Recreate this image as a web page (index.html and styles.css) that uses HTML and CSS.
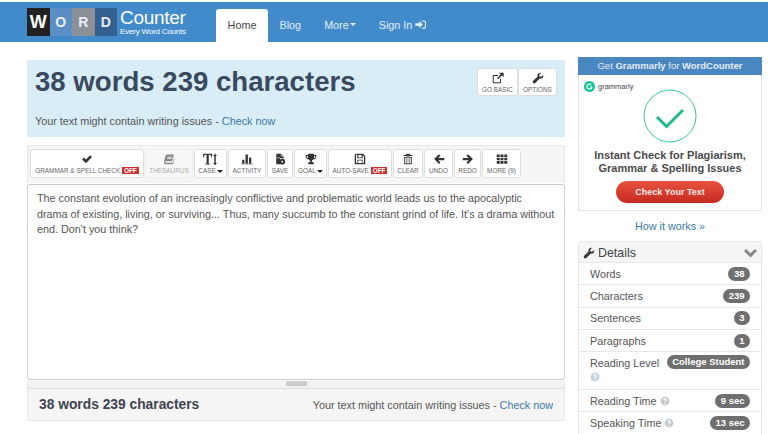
FILE: index.html
```html
<!DOCTYPE html>
<html lang="en">
<head>
<meta charset="utf-8">
<title>WordCounter</title>
<link rel="stylesheet" href="styles.css">
</head>
<body>
<svg class="defs" width="0" height="0" aria-hidden="true">
  <symbol id="i-check" viewBox="0 0 16 16"><path d="M1.500 8.500l2.400-2.400L6.600 8.700 12.300 3l2.400 2.400L6.600 13.500z"/></symbol>
  <symbol id="i-book" viewBox="0 0 16 16"><path d="M5 2h9.500l-2.400 9H3.400c-.6 0-.9.500-.8 1s.500 1 1 1h9.600l1.600-6 .6.500L13.500 15H3.200C2 15 1 13.600 1.300 12L3.400 3.500C3.600 2.600 4.200 2 5 2z"/><path d="M6 5h6v1H6zM5.500 7h6v1h-6z" fill="#fff"/></symbol>
  <symbol id="i-text" viewBox="0 0 18 16"><path d="M0 1h11v4.500h-.8C10 3.500 9.400 2 8 2H6.800v11l1.700.5v.8H2.500v-.8L4.200 13V2H3C1.600 2 1 3.500.8 5.500H0z"/><path d="M14.600 1l2.400 2.800h-1.500v8.400H17l-2.400 2.800-2.400-2.800h1.500V3.800h-1.500z"/></symbol>
  <symbol id="i-bars" viewBox="0 0 16 16"><path d="M1.500 9h3v5h-3zM6 2h3.200v12H6zM10.700 6h3v8h-3zM0 14.200h16V15H0z"/></symbol>
  <symbol id="i-file" viewBox="0 0 16 16"><path d="M3 1h6l4 4v2H8v8H3z"/><path d="M9 1v4h4z" fill="#999"/><circle cx="11" cy="11.500" r="3.800"/><circle cx="11" cy="11.500" r="1.200" fill="#fff"/><path d="M4.500 6h3v1h-3z" fill="#fff"/></symbol>
  <symbol id="i-trophy" viewBox="0 0 16 16"><path d="M4 1h8v1.500h3v2c0 2-1.500 3.500-3.500 3.700-.5.900-1.300 1.500-2.300 1.800v2h2v1.500h.8V15H4v-1.500h.8V12h2v-2c-1-.3-1.800-.9-2.300-1.800C2.500 8 1 6.500 1 4.500v-2h3zm0 3H2.500v.5c0 1 .7 1.900 1.700 2.200zm8 0v2.700c1-.3 1.700-1.200 1.700-2.200V4z"/></symbol>
  <symbol id="i-floppy" viewBox="0 0 16 16"><path fill-rule="evenodd" d="M2 1h10l3 3v11H1V2zm.8.800v11.400h10.400V4.500L11.500 2.800V7h-7V2.800zM6 2.800V6h4V2.800zM4.500 9h7v4.500h-1V10h-5v3.500h-1z"/></symbol>
  <symbol id="i-trash" viewBox="0 0 16 16"><path fill-rule="evenodd" d="M6 1h4l1 1.500h3V4H2V2.500h3zM3 5h10v10H3zm1.200 1.200v7.600h7.600V6.200zM6 7h1v6H6zm3 0h1v6H9z"/></symbol>
  <symbol id="i-left" viewBox="0 0 16 16"><path d="M8 1.500l2 2L7 6.500h8v3H7l3 3-2 2L1.500 8z"/></symbol>
  <symbol id="i-right" viewBox="0 0 16 16"><path d="M8 1.500l-2 2 3 3H1v3h8l-3 3 2 2L14.500 8z"/></symbol>
  <symbol id="i-grid" viewBox="0 0 16 16"><path d="M1 2h4v3.400H1zm5 0h4v3.400H6zm5 0h4v3.400h-4zM1 6.400h4v3.400H1zm5 0h4v3.400H6zm5 0h4v3.400h-4zM1 10.800h4v3.400H1zm5 0h4v3.400H6zm5 0h4v3.400h-4z"/></symbol>
  <symbol id="i-ext" viewBox="0 0 16 16"><path d="M12 9v4.500c0 .8-.7 1.500-1.500 1.500h-8C1.700 15 1 14.300 1 13.500v-8C1 4.700 1.700 4 2.500 4H8v1.300H3c-.3 0-.7.300-.7.700v7c0 .4.400.7.700.7h7c.4 0 .7-.3.700-.7V9z"/><path d="M9.500 1H15.500v6l-2.200-2.200-5 5-1.600-1.600 5-5z"/></symbol>
  <symbol id="i-wrench" viewBox="0 0 16 16"><path d="M15 4.200c.4 1.400 0 2.800-1 3.700-1 1-2.400 1.200-3.700.8L4.400 14.600c-.8.800-2 .8-2.800 0-.8-.8-.8-2 0-2.800L7.500 5.900c-.5-1.300-.2-2.800.8-3.800 1-1 2.400-1.300 3.700-.9L9.500 3.700l.4 2.200 2.200.5z"/></symbol>
  <symbol id="i-signin" viewBox="0 0 16 16"><path d="M6 3l5.500 5L6 13v-3H0.500V6H6z"/><path d="M10 2h3.500C14.900 2 16 3.100 16 4.500v7c0 1.400-1.100 2.500-2.500 2.500H10v-1.800h3.200c.7 0 1.200-.5 1.200-1.200V5c0-.7-.5-1.200-1.200-1.200H10z"/></symbol>
  <symbol id="i-help" viewBox="0 0 16 16"><path fill-rule="evenodd" d="M8 1a7 7 0 110 14A7 7 0 018 1zM7 11v2h2v-2zM8 3.500c-1.800 0-3 1-3.200 2.500l1.800.4C6.800 5.600 7.200 5.200 8 5.200s1.200.4 1.200.9c0 .5-.4.800-1 1.200C7.400 7.800 7 8.400 7 9.200v.8h2v-.5c0-.4.200-.6.800-1 .8-.5 1.300-1.200 1.300-2.300 0-1.600-1.300-2.700-3.100-2.700z"/></symbol>
  <symbol id="i-chevron" viewBox="0 0 16 12"><path d="M2.500 1L8 6.300 13.500 1 16 3.600 8 11.500 0 3.600z"/></symbol>
</svg>

<header class="navbar">
  <a class="logo" href="#">
    <span class="tile tile-w">W</span><span class="tile tile-o">O</span><span class="tile tile-r">R</span><span class="tile tile-d">D</span>
    <span class="logo-text"><span class="logo-main">Counter</span><span class="logo-sub">Every Word Counts</span></span>
  </a>
  <nav class="nav">
    <a class="nav-item active" href="#">Home</a>
    <a class="nav-item" href="#">Blog</a>
    <a class="nav-item" href="#">More<span class="caret"></span></a>
    <a class="nav-item" href="#">Sign In <svg class="nav-icon"><use href="#i-signin"/></svg></a>
  </nav>
</header>

<main class="page">
  <section class="left">
    <div class="hero">
      <div class="hero-top">
        <h1>38 words 239 characters</h1>
        <div class="hero-btns">
          <button class="tool tool-basic"><svg class="ic"><use href="#i-ext"/></svg><span>GO BASIC</span></button>
          <button class="tool tool-options"><svg class="ic"><use href="#i-wrench"/></svg><span>OPTIONS</span></button>
        </div>
      </div>
      <p class="hero-note">Your text might contain writing issues - <a href="#">Check now</a></p>
    </div>

    <div class="toolbar">
      <button class="tool w-grammar"><svg class="ic"><use href="#i-check"/></svg><span>GRAMMAR &amp; SPELL CHECK <b class="off">OFF</b></span></button>
      <button class="tool w-thes disabled"><svg class="ic"><use href="#i-book"/></svg><span>THESAURUS</span></button>
      <button class="tool w-case"><svg class="ic ic-text"><use href="#i-text"/></svg><span>CASE<i class="caret"></i></span></button>
      <button class="tool w-act"><svg class="ic"><use href="#i-bars"/></svg><span>ACTIVITY</span></button>
      <button class="tool w-save"><svg class="ic"><use href="#i-file"/></svg><span>SAVE</span></button>
      <button class="tool w-goal"><svg class="ic"><use href="#i-trophy"/></svg><span>GOAL<i class="caret"></i></span></button>
      <button class="tool w-auto"><svg class="ic"><use href="#i-floppy"/></svg><span>AUTO-SAVE <b class="off">OFF</b></span></button>
      <button class="tool w-clear"><svg class="ic"><use href="#i-trash"/></svg><span>CLEAR</span></button>
      <button class="tool w-undo"><svg class="ic"><use href="#i-left"/></svg><span>UNDO</span></button>
      <button class="tool w-redo"><svg class="ic"><use href="#i-right"/></svg><span>REDO</span></button>
      <button class="tool w-more"><svg class="ic"><use href="#i-grid"/></svg><span>MORE (9)</span></button>
    </div>

    <div class="editor">The constant evolution of an increasingly conflictive and problematic world leads us to the apocalyptic drama of existing, living, or surviving... Thus, many succumb to the constant grind of life. It's a drama without end. Don't you think?</div>
    <div class="grip"><span class="grip-handle"></span></div>

    <div class="summary">
      <strong>38 words 239 characters</strong>
      <span class="summary-note">Your text might contain writing issues - <a href="#">Check now</a></span>
    </div>
  </section>

  <aside class="right">
    <div class="ad">
      <div class="ad-head">Get <b>Grammarly</b> for <b>WordCounter</b></div>
      <div class="ad-body">
        <div class="ad-brand"><svg class="ad-g" viewBox="0 0 16 16"><circle cx="8" cy="8" r="8" fill="#15c39a"/><path d="M11.500 8.500A3.600 3.600 0 118 4.500c1 0 1.800.3 2.500 1" fill="none" stroke="#fff" stroke-width="1.500"/><path d="M8.500 8.500h3" stroke="#fff" stroke-width="1.500"/></svg><span>grammarly</span></div>
        <svg class="ad-circle" viewBox="0 0 54 54"><circle cx="27" cy="27" r="26" fill="#fff" stroke="#3fc3a3" stroke-width="1"/><path d="M14 28l9.500 9.500L40 21" fill="none" stroke="#1fb88f" stroke-width="3"/></svg>
        <div class="ad-title">Instant Check for Plagiarism,<br>Grammar &amp; Spelling Issues</div>
        <a class="ad-btn" href="#">Check Your Text</a>
      </div>
    </div>
    <a class="how" href="#">How it works »</a>

    <div class="details">
      <div class="details-head"><svg class="det-wrench"><use href="#i-wrench"/></svg><span class="det-title">Details</span><svg class="det-chev"><use href="#i-chevron"/></svg></div>
      <div class="row"><span>Words</span><span class="badge">38</span></div>
      <div class="row"><span>Characters</span><span class="badge">239</span></div>
      <div class="row"><span>Sentences</span><span class="badge">3</span></div>
      <div class="row"><span>Paragraphs</span><span class="badge">1</span></div>
      <div class="row row-tall"><span class="row-label">Reading Level<svg class="help help-blue"><use href="#i-help"/></svg></span><span class="badge">College Student</span></div>
      <div class="row"><span>Reading Time <svg class="help"><use href="#i-help"/></svg></span><span class="badge">9 sec</span></div>
      <div class="row"><span>Speaking Time <svg class="help"><use href="#i-help"/></svg></span><span class="badge">13 sec</span></div>
    </div>
  </aside>
</main>
</body>
</html>
```
FILE: styles.css
```css
* { box-sizing: border-box; }
html, body { margin: 0; height: 434px; overflow: hidden; background: #fff; }
body { font-family: "Liberation Sans", Arial, sans-serif; font-size: 10.800px; color: #555; padding-top: 2px; }
a { color: #3b77a5; text-decoration: none; }
.defs { display: block; height: 0; }

/* navbar */
.navbar { display: flex; height: 40px; background: #428bca; padding-left: 27px; }
.logo { display: flex; align-items: flex-start; padding-top: 6px; color: #fff; width: 189px; }
.tile { width: 22.500px; height: 28px; display: flex; align-items: center; justify-content: center; color: #e6edf4; font-weight: bold; font-size: 14px; }
.tile-w { background: #222; font-size: 18px; color: #fff; }
.tile-o { background: #5b8ec4; }
.tile-r { background: #8b9096; }
.tile-d { background: #34608f; }
.logo-text { display: flex; flex-direction: column; margin-left: 3px; padding-top: 1px; }
.logo-main { font-size: 19px; line-height: 18px; letter-spacing: -0.300px; color: #fff; }
.logo-sub { font-size: 8px; line-height: 8px; margin-top: 1px; color: #fff; white-space: nowrap; letter-spacing: -0.200px; }
.nav { display: flex; align-items: flex-end; }
.nav-item { display: flex; align-items: center; height: 33px; padding: 0 11.500px 2px; color: #e3edf6; font-size: 10.800px; }
.nav-item.active { background: #fff; color: #444; border-radius: 3px 3px 0 0; width: 52px; justify-content: center; padding: 0 0 2px; }
.nav-item .caret { margin-left: 1px; }
.nav-icon { width: 11px; height: 11px; margin-left: 3px; fill: #e3edf6; }
.caret { display: inline-block; width: 0; height: 0; border: 3px solid transparent; border-top-color: currentColor; border-bottom: 0; vertical-align: middle; }

/* layout */
.page { display: flex; gap: 13px; padding: 15px 6px 0 27px; }
.left { width: 538px; flex: none; }
.right { width: 184px; flex: none; }

/* hero */
.hero { height: 77px; background: #d9edf7; padding: 8px 8px 0; margin-top: 3px; }
.hero-top { display: flex; justify-content: space-between; align-items: flex-start; height: 46px; }
h1 { margin: -1px 0 0; font-size: 27.600px; line-height: 29px; color: #3a4a5e; }
.hero-btns { display: flex; }
.hero-note { margin: 0; font-size: 10.800px; line-height: 14px; color: #555; }

/* tools */
.tool { display: flex; flex-direction: column; align-items: center; justify-content: flex-start; height: 29px; padding: 3px 0 0; border: 1px solid #ddd; border-radius: 3px; background: #fff; color: #666; font-family: inherit; font-size: 6.400px; line-height: 9px; white-space: nowrap; }
.ic { width: 12px; height: 12px; fill: #333; margin-bottom: 1px; flex: none; }
.ic-text { width: 15px; height: 13px; margin-bottom: 0; }
.tool-basic { width: 41px; }
.tool-options { width: 39px; }
.hero-btns .tool { height: 28px; }
.toolbar { display: flex; gap: 1px; height: 38px; margin-top: 8px; padding: 3px 2px; background: #f5f5f5; border: 1px solid #e6e6e6; border-bottom: 0; border-radius: 3px 3px 0 0; }
.w-grammar { width: 114px; }
.w-thes { width: 48px; }
.w-case { width: 33px; }
.w-act { width: 38px; }
.w-save { width: 26px; }
.w-goal { width: 33px; }
.w-auto { width: 64px; }
.w-clear { width: 30px; }
.w-undo { width: 29px; }
.w-redo { width: 27px; }
.w-more { width: 39px; }
.disabled { color: #aaa; background: #f7f7f7; border-color: #eee; }
.disabled .ic { fill: #888; }
.off { background: #c9302c; color: #fff; padding: 0 2px; font-weight: bold; font-size: 6.400px; }
.tool .caret { margin-left: 1px; border-top-color: #222; }

/* editor */
.editor { height: 196px; margin-top: 1px; padding: 6px 9px; border: 1px solid #ccc; border-radius: 3px; background: #fff; font-size: 10.800px; line-height: 15.500px; color: #555; }
.grip { display: flex; justify-content: center; height: 8px; margin-top: 1px; background: #f2f2f2; border: 1px solid #ddd; border-top: 0; }
.grip-handle { width: 21px; height: 5px; background: #ccc; }
.summary { display: flex; justify-content: space-between; align-items: center; height: 32px; padding: 0 11px; background: #f5f5f5; border: 1px solid #e6e6e6; border-top: 0; border-radius: 0 0 3px 3px; }
.summary strong { font-size: 13.800px; color: #3f4450; }
.summary-note { font-size: 10.800px; }

/* ad */
.ad { border: 1px solid #e4e4e4; height: 154px; background: #fff; }
.ad-head { height: 18px; margin: -1px -1px 0; background: #4a86c0; color: #e4edf6; text-align: center; font-size: 9.500px; line-height: 18px; }
.ad-body { display: flex; flex-direction: column; align-items: center; }
.ad-brand { align-self: flex-start; display: flex; align-items: center; gap: 3px; margin: 6px 0 0 5px; font-size: 7.500px; line-height: 10px; color: #444; }
.ad-g { width: 11px; height: 11px; }
.ad-circle { width: 54px; height: 54px; margin-top: -3px; }
.ad-title { margin-top: 6px; font-size: 11px; line-height: 13px; font-weight: bold; text-align: center; color: #4a4a4a; }
.ad-btn { display: block; width: 108px; height: 22px; margin-top: 6px; border-radius: 11px; background: linear-gradient(#e8533f, #c6291f); color: #fbe9e6; font-size: 9px; font-weight: bold; line-height: 22px; text-align: center; }
.how { display: block; margin-top: 8px; text-align: center; font-size: 10.800px; line-height: 14px; }

/* details */
.details { margin-top: 8px; border: 1px solid #e6e6e6; border-bottom: 0; border-radius: 3px 3px 0 0; }
.details-head { display: flex; align-items: center; height: 20px; padding: 1px 4px 0; background: #f5f5f5; font-size: 12.400px; color: #444; }
.det-wrench { width: 12px; height: 12px; fill: #333; margin-right: 3px; }
.det-title { flex: 1; }
.det-chev { width: 13px; height: 10px; fill: #888; }
.row { display: flex; justify-content: space-between; align-items: center; height: 22.300px; padding: 0 11px; border-top: 1px solid #e8e8e8; font-size: 10.800px; color: #555; }
.row-tall { height: 38px; align-items: flex-start; padding-top: 3px; }
.row-label { width: 75px; line-height: 16px; }
.badge { display: inline-block; padding: 0 5.500px; border-radius: 7px; background: #6f6f6f; color: #fff; font-size: 9.500px; font-weight: bold; line-height: 14px; white-space: nowrap; }
.help { width: 10px; height: 10px; fill: #c4c8cc; vertical-align: -1px; }
.help-blue { display: block; fill: #bcd0dd; margin-top: 1px; }
```
